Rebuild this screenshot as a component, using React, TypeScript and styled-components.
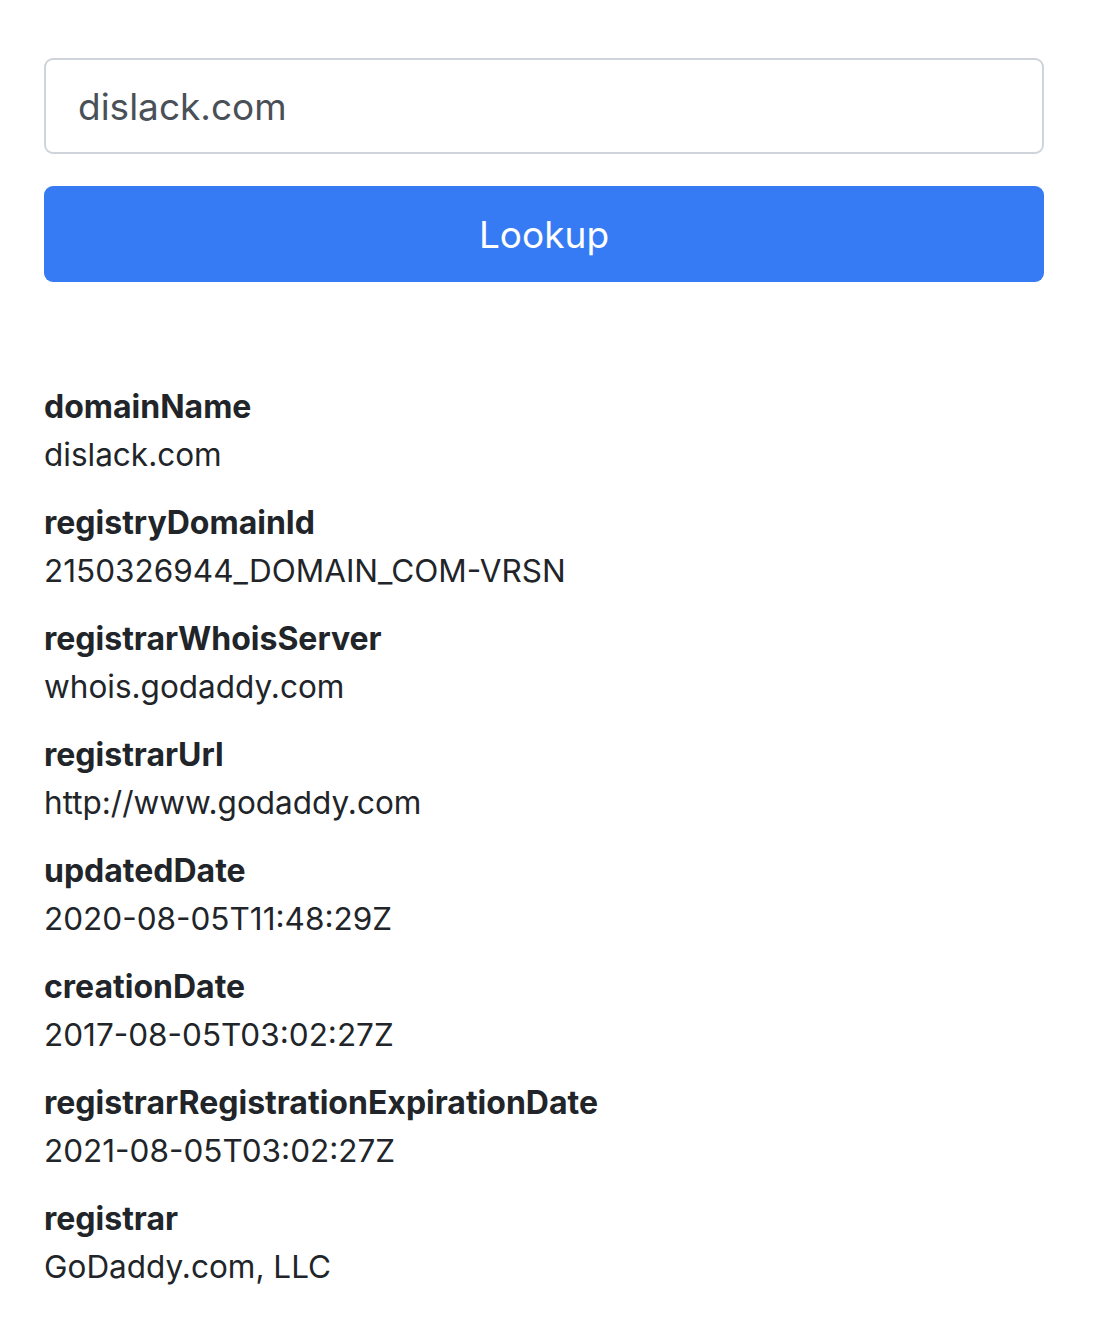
import styled, { createGlobalStyle } from "styled-components";

const GlobalStyle = createGlobalStyle`
  * { box-sizing: border-box; }
  body {
    margin: 0;
    background: #fff;
    color: #212529;
    font-family: Inter, "Liberation Sans", Arial, sans-serif;
  }
`;

const S_Page = styled.main`
  padding: 58px 50px 40px 44px;
`;

const S_Form = styled.form`
  display: flex;
  flex-direction: column;
  gap: 32px;
  width: 1000px;
`;

const S_Input = styled.input`
  height: 96px;
  padding: 0 32px;
  font-family: inherit;
  font-size: 37px;
  color: #495057;
  background: #fff;
  border: 2px solid #ced4da;
  border-radius: 9px;
  outline: none;
`;

const S_Button = styled.button`
  height: 96px;
  font-family: inherit;
  font-size: 37px;
  color: #fff;
  background: #377bf4;
  border: none;
  border-radius: 9px;
`;

const S_List = styled.dl`
  margin: 101px 0 0;
`;

const S_Term = styled.dt`
  font-size: 32px;
  font-weight: 700;
  line-height: 48px;
`;

const S_Value = styled.dd`
  margin: 0 0 20px;
  font-size: 31.5px;
  line-height: 48px;
`;

const records: [string, string][] = [
  ["domainName", "dislack.com"],
  ["registryDomainId", "2150326944_DOMAIN_COM-VRSN"],
  ["registrarWhoisServer", "whois.godaddy.com"],
  ["registrarUrl", "http://www.godaddy.com"],
  ["updatedDate", "2020-08-05T11:48:29Z"],
  ["creationDate", "2017-08-05T03:02:27Z"],
  ["registrarRegistrationExpirationDate", "2021-08-05T03:02:27Z"],
  ["registrar", "GoDaddy.com, LLC"],
];

const App = () => {
  return (
    <>
      <GlobalStyle />
      <S_Page>
        <S_Form onSubmit={(e) => e.preventDefault()}>
          <S_Input type="text" defaultValue="dislack.com" />
          <S_Button type="submit">Lookup</S_Button>
        </S_Form>
        <S_List>
          {records.map(([key, value]) => (
            <div key={key}>
              <S_Term>{key}</S_Term>
              <S_Value>{value}</S_Value>
            </div>
          ))}
        </S_List>
      </S_Page>
    </>
  );
};

export default App;
